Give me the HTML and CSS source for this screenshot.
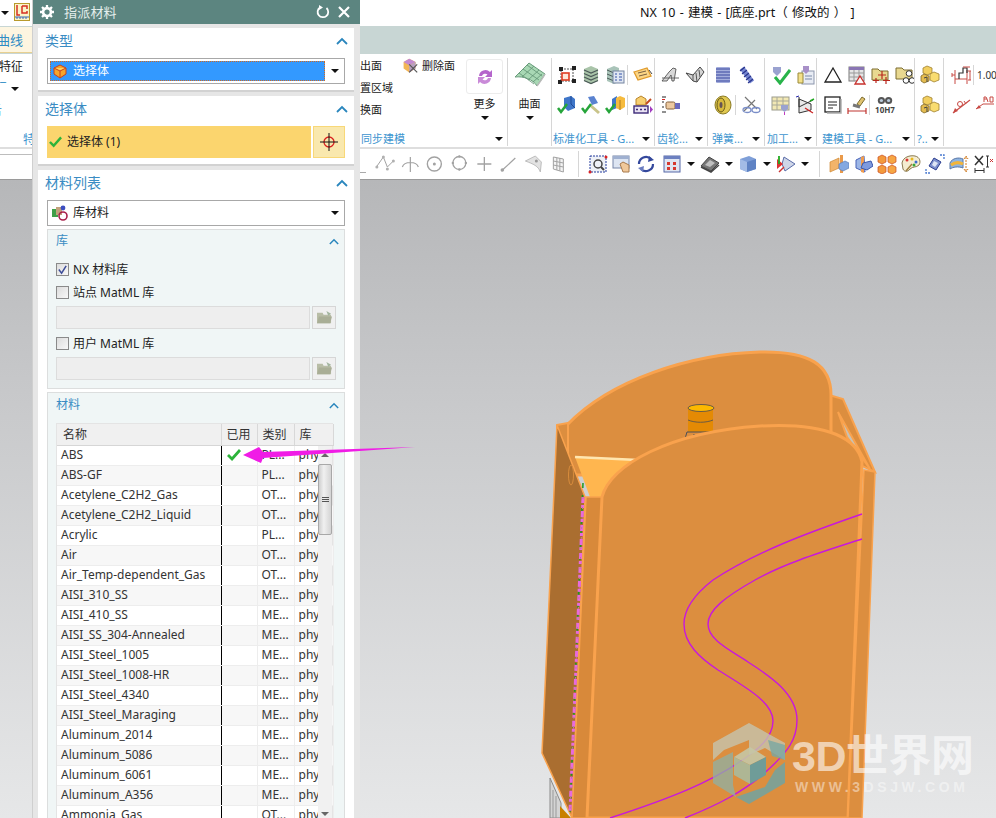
FILE: index.html
```html
<!DOCTYPE html>
<html lang="zh-CN">
<head>
<meta charset="utf-8">
<title>NX 10 - 建模</title>
<link rel="stylesheet" href="styles.css">
</head>
<body>
<svg class="defs" aria-hidden="true">
  <symbol id="frame" viewBox="0 0 20 20"><path d="M4 4H16V16H4Z" fill="none" stroke="#555" stroke-dasharray="2 1"/><rect x="2" y="2" width="4" height="4" fill="#222"/><rect x="15" y="1" width="4" height="4" fill="#222"/><rect x="1" y="15" width="4" height="4" fill="#222"/><rect x="15" y="14" width="4" height="4" fill="#222"/><rect x="5" y="8" width="7" height="7" fill="#fde7d8" stroke="#e03c20" stroke-width="1.6"/></symbol>
  <symbol id="stack" viewBox="0 0 20 20"><path d="M3 4L10 1L17 4V16L10 19L3 16Z" fill="#a9c4a9"/><path d="M3 5L10 8L17 5M3 8.500L10 11.500L17 8.500M3 12L10 15L17 12M3 15.500L10 18.500L17 15.500" fill="none" stroke="#4c5a58" stroke-width="1.200"/></symbol>
  <symbol id="stackdoc" viewBox="0 0 20 20"><path d="M2 4L9 1L14 3V17L9 19L2 16Z" fill="#a9c4b9"/><path d="M2 5L9 8M2 9L9 12M2 13L9 16" stroke="#4c5a58" fill="none"/><rect x="8" y="6" width="11" height="12" fill="#dfe6f2" stroke="#7484a0"/><path d="M10 9H12M14 9H17M10 12H12M14 12H17M10 15H12M14 15H17" stroke="#3552a8"/></symbol>
  <symbol id="tag" viewBox="0 0 20 20"><path d="M1 7L14 3L18 11L5 15Z" fill="#fbd585" stroke="#e09a2a" stroke-width="1.300"/><path d="M5 8L13 6M6 11L14 9" stroke="#7a6040"/><path d="M16 5L19 9" stroke="#444"/></symbol>
  <symbol id="bluecheck" viewBox="0 0 20 20"><path d="M7 3L14 1L18 4V13L11 16L7 12Z" fill="#3f76c9"/><path d="M14 1V9L18 13" fill="none" stroke="#1f4a95"/><path d="M1 13L4 17L10 9" fill="none" stroke="#26a53a" stroke-width="2.500"/></symbol>
  <symbol id="hammer" viewBox="0 0 20 20"><path d="M7 2L13 1L17 8L11 10Z" fill="#5a82d0"/><path d="M9 10L18 18" stroke="#c9c48a" stroke-width="3"/><path d="M1 13L4 17L10 9" fill="none" stroke="#26a53a" stroke-width="2.500"/></symbol>
  <symbol id="boxcheck" viewBox="0 0 20 20"><path d="M7 4L12 1V13L7 15Z" fill="#3f76c9"/><path d="M11 3L15 1L20 3V12L15 15L11 13Z" fill="#f6bb3e"/><path d="M15 5V15" stroke="#b27d1d"/><path d="M1 13L4 17L10 9" fill="none" stroke="#26a53a" stroke-width="2.500"/></symbol>
  <symbol id="boxpen" viewBox="0 0 20 20"><path d="M3 4L8 1L13 4V10H3Z" fill="#f7cf70" stroke="#b9852b"/><rect x="1" y="11" width="14" height="7" fill="#e8e2f2" stroke="#3c2a78" stroke-width="1.400"/><path d="M3 14.500H5M7 14.500H9M11 14.500H13" stroke="#3c2a78" stroke-width="1.500"/><path d="M17 11V18L20 14.500Z" fill="#a23dc0"/><path d="M13 9L18 4" stroke="#c24a20" stroke-width="2"/></symbol>
  <symbol id="gear1" viewBox="0 0 20 20"><path d="M1 16L8 7L12 3L15 4L13 16H11L10 10L6 16Z" fill="#d8d8d8" stroke="#444" stroke-width=".8"/><path d="M1 13H18" stroke="#666"/></symbol>
  <symbol id="gear2" viewBox="0 0 20 20"><path d="M1 8L8 10L15 2L19 7L12 17L8 16Z" fill="#d4d4d4" stroke="#444"/><path d="M8 10L8 16M11 8L12 17M14 5L15 12" stroke="#555"/></symbol>
  <symbol id="hand" viewBox="0 0 20 20"><path d="M1 2H5M1 7H3M1 12H3M1 17H5" stroke="#222"/><path d="M1 4.500H4" stroke="#d22" /><rect x="5" y="7" width="9" height="7" rx="1.500" fill="#ecc9a0" stroke="#84603c"/><rect x="14" y="8" width="5" height="6" fill="#6a6abe"/></symbol>
  <symbol id="spring" viewBox="0 0 20 20"><rect x="3" y="2" width="14" height="16" rx="1" fill="#a4aedc"/><path d="M3 4H17M3 7H17M3 10H17M3 13H17M3 16H17" stroke="#3a48a0" stroke-width="1.200"/></symbol>
  <symbol id="springd" viewBox="0 0 20 20"><path d="M5 3L15 17" stroke="#7585d0" stroke-width="5"/><path d="M3 6L8 2M5 9L10 5M7 12L12 8M9 15L14 11M11 18L16 14" stroke="#26328a" stroke-width="1.100"/></symbol>
  <symbol id="coil" viewBox="0 0 20 20"><ellipse cx="10" cy="10" rx="8" ry="9" fill="#e0c850" stroke="#8a7a24"/><ellipse cx="8" cy="10" rx="4" ry="7" fill="#d6b93c" stroke="#6a5c18"/><ellipse cx="8" cy="10" rx="1.500" ry="3" fill="#655"/></symbol>
  <symbol id="scissors" viewBox="0 0 20 20"><path d="M4 2L16 14M3 16L14 5" stroke="#777" stroke-width="1.200"/><ellipse cx="6" cy="15" rx="4" ry="2.500" fill="none" stroke="#7a8ec8" stroke-width="1.300"/><ellipse cx="15" cy="15" rx="4" ry="2.500" fill="none" stroke="#7a8ec8" stroke-width="1.300"/></symbol>
  <symbol id="mcheck" viewBox="0 0 20 20"><path d="M2 2H10V7L6 11L2 7Z" fill="#9aa2d0"/><path d="M4 12L9 18L19 5" fill="none" stroke="#28b34a" stroke-width="3"/></symbol>
  <symbol id="mdoc" viewBox="0 0 20 20"><rect x="7" y="6" width="12" height="13" fill="#e8ecf4" stroke="#8c96ac"/><path d="M3 8H8V18H3Z" fill="#f3e08a" stroke="#9a8a3a"/><path d="M8 1H14V6L11 9L8 6Z" fill="#a890c8"/><path d="M10 11H17M10 14H17" stroke="#7a8aa8"/></symbol>
  <symbol id="mgrid" viewBox="0 0 20 20"><rect x="1" y="2" width="17" height="13" fill="#f2e8b4" stroke="#9c9c8c"/><path d="M1 6H18M1 10H18M6 2V15M12 2V15" stroke="#a8a898"/><path d="M10 10H17V14L13.500 17L10 14Z" fill="#9aa2d0"/><path d="M13.500 17V20" stroke="#c03bc0"/></symbol>
  <symbol id="axes" viewBox="0 0 20 20"><path d="M4 4L16 9V15L4 18Z" fill="#e8e8e8" stroke="#333"/><path d="M4 2V12L18 5" fill="none" stroke="#333"/><path d="M1 2L4 1" stroke="#22a"/><path d="M15 6L19 4" stroke="#2a2" stroke-width="1.500"/><path d="M10 13L18 18" stroke="#c22" stroke-width="1.200"/></symbol>
  <symbol id="tri" viewBox="0 0 20 20"><path d="M10 3L18 17H2Z" fill="none" stroke="#222" stroke-width="1.300"/></symbol>
  <symbol id="table" viewBox="0 0 20 20"><rect x="2" y="2" width="15" height="14" fill="#e6e6e6" stroke="#7a7a7a"/><rect x="2" y="2" width="15" height="3" fill="#8a76b4"/><path d="M2 8H17M2 12H17M7 5V16M12 5V16" stroke="#999"/><path d="M13 11L18 19H8Z" fill="#fbfbfb" stroke="#c8302c" stroke-width="1.300"/></symbol>
  <symbol id="folderplus" viewBox="0 0 20 20"><path d="M1 4H7L9 6H17V15H1Z" fill="#e8d890" stroke="#7c6c30"/><path d="M11 6V14M7 10H15M15 12V19M12 15.500H19M5 13V18M2 15.500H8" stroke="#b8281e" stroke-width="1.200"/></symbol>
  <symbol id="foldercirc" viewBox="0 0 20 20"><path d="M1 3H7L9 5H17V14H1Z" fill="#e8d890" stroke="#7c6c30"/><circle cx="14" cy="8.500" r="2.800" fill="#fff" stroke="#333"/><circle cx="11" cy="15.500" r="2.800" fill="#fff" stroke="#333"/><circle cx="17" cy="15.500" r="2.800" fill="#fff" stroke="#333"/></symbol>
  <symbol id="note" viewBox="0 0 20 20"><rect x="2" y="2" width="15" height="15" fill="#fff" stroke="#222" stroke-width="1.300"/><path d="M5 7H14M5 10H14M5 13H10" stroke="#222"/><path d="M18 4V18H4" fill="none" stroke="#aaa" stroke-width="1.400"/></symbol>
  <symbol id="brush" viewBox="0 0 20 20"><path d="M10 9L15 2L18 4L13 11Z" fill="#e0c270" stroke="#7c6c30"/><path d="M6 10L13 12" stroke="#777" stroke-width="3"/><path d="M1 13V19M19 13V19M1 16H19" stroke="#c03530" stroke-width="1.200"/></symbol>
  <symbol id="boxes" viewBox="0 0 20 20"><path d="M7 1L12 3V8L7 10L3 8V3Z" fill="#f2cf60" stroke="#a08030" stroke-width=".8"/><path d="M4 9L9 11V16L4 18L1 16V11Z" fill="#e4bc50" stroke="#806828" stroke-width=".8"/><path d="M14 7L19 9V15L14 17L10 15V9Z" fill="#f9dc70" stroke="#a08030" stroke-width=".8"/><path d="M4 13L7 12V17" stroke="#444" fill="none"/></symbol>
  <symbol id="step" viewBox="0 0 20 20"><path d="M1 10H4M1 8V12M4 14H16M4 5V19M16 5V19" stroke="#c84a44" fill="none"/><path d="M8 14V8H12V3H16V8" fill="none" stroke="#333" stroke-width="1.200"/><path d="M12 2H19M19 6V15M17 6H20M17 15H20" stroke="#c84a44"/></symbol>
  <symbol id="rarrow" viewBox="0 0 20 20"><path d="M2 18L19 5" stroke="#c84a44" stroke-width="1.200"/><path d="M2 18L7 16L4 13Z" fill="#c84a44"/><circle cx="9" cy="9" r="2.500" fill="none" stroke="#c84a44"/><path d="M13 6L15 9" stroke="#c84a44"/></symbol>
  <symbol id="rphi" viewBox="0 0 20 20"><path d="M1 14L8 9H19" fill="none" stroke="#c84a44"/><path d="M1 14L6 13L4 10Z" fill="#c84a44"/><path d="M9 7V2H11L12 4H9M12 4L13 7M15 2H18V7H15Z" fill="none" stroke="#c84a44"/></symbol>
  <symbol id="t-curve" viewBox="0 0 20 20"><path d="M1 13L8 3L12 13L18 7" fill="none" stroke="#a2a2a2"/><circle cx="1.500" cy="13" r="1.500" fill="#b0b0b0"/><circle cx="8" cy="3" r="1.500" fill="#b0b0b0"/><circle cx="12" cy="15" r="1.500" fill="#b0b0b0"/><circle cx="18" cy="7" r="1.500" fill="#b0b0b0"/></symbol>
  <symbol id="t-arc" viewBox="0 0 20 20"><path d="M2 13C4 7 16 7 18 13M10 3V18" fill="none" stroke="#a2a2a2" stroke-width="1.200"/></symbol>
  <symbol id="t-dot" viewBox="0 0 20 20"><circle cx="10" cy="10" r="7" fill="none" stroke="#a2a2a2" stroke-width="1.400"/><circle cx="10" cy="10" r="1.500" fill="#a2a2a2"/></symbol>
  <symbol id="t-quad" viewBox="0 0 20 20"><circle cx="10" cy="9" r="6.500" fill="none" stroke="#a2a2a2" stroke-width="1.300"/><circle cx="10" cy="2.500" r="1.200" fill="#a2a2a2"/><circle cx="10" cy="15.500" r="1.200" fill="#a2a2a2"/><circle cx="3.500" cy="9" r="1.200" fill="#a2a2a2"/><circle cx="16.500" cy="9" r="1.200" fill="#a2a2a2"/></symbol>
  <symbol id="t-plus" viewBox="0 0 20 20"><path d="M10 3V17M3 10H17" stroke="#a2a2a2" stroke-width="1.300"/></symbol>
  <symbol id="t-line" viewBox="0 0 20 20"><path d="M3 17L17 4" stroke="#a2a2a2" stroke-width="1.200"/><circle cx="4" cy="16" r="1.800" fill="#a2a2a2"/></symbol>
  <symbol id="t-face" viewBox="0 0 20 20"><path d="M2 7L12 2L18 8L17 18C15 12 10 10 2 7Z" fill="#e2e2e2" stroke="#bdbdbd"/><circle cx="13" cy="7" r="1.500" fill="#999"/></symbol>
  <symbol id="t-grid" viewBox="0 0 20 20"><path d="M5 3L15 5V18L5 15Z" fill="#f4f4f4" stroke="#a2a2a2"/><path d="M5 7L15 9M5 11L15 13M8.500 4V16M11.500 4V17" stroke="#a2a2a2"/></symbol>
  <symbol id="t-view" viewBox="0 0 20 20"><rect x="2" y="2" width="16" height="4" fill="#7d8cc0"/><path d="M2 2H18V18H2Z" fill="#eef1f7" stroke="#223b9c" stroke-dasharray="2 1"/><circle cx="10" cy="10" r="4" fill="none" stroke="#444" stroke-width="1.500"/><path d="M13 13L16 16" stroke="#444" stroke-width="2"/><circle cx="2" cy="18" r="1.500" fill="#d22"/><circle cx="18" cy="3" r="1.500" fill="#d22"/></symbol>
  <symbol id="t-hand" viewBox="0 0 20 20"><rect x="1" y="2" width="16" height="12" fill="#dde5f2" stroke="#7686a8"/><rect x="1" y="2" width="16" height="3" fill="#9fb0d0"/><path d="M8 10L11 8L17 11V18H11Z" fill="#f0c89a" stroke="#a87a4c"/></symbol>
  <symbol id="t-rot" viewBox="0 0 20 20"><path d="M3 10A7 7 0 0 1 15 5" fill="none" stroke="#34489c" stroke-width="2.200"/><path d="M17 10A7 7 0 0 1 5 15" fill="none" stroke="#34489c" stroke-width="2.200"/><path d="M13 2L18 6L12 8Z" fill="#34489c"/><path d="M7 18L2 14L8 12Z" fill="#6a7cc0"/></symbol>
  <symbol id="t-disp" viewBox="0 0 20 20"><rect x="2" y="2" width="16" height="16" fill="#dfe6f2" stroke="#5668a8"/><rect x="2" y="2" width="16" height="3" fill="#6c80c0"/><path d="M5 8H8V11H5ZM11 8H14V11H11ZM5 13H8V16H5ZM11 13H14V16H11Z" fill="#d63a30"/></symbol>
  <symbol id="t-gray" viewBox="0 0 20 20"><path d="M1 12L9 3L19 9L11 17Z" fill="#777" stroke="#444"/><path d="M5 11L10 6L15 9L10 13Z" fill="#c0c0c0"/><path d="M1 13L11 18L19 11" fill="none" stroke="#444" stroke-width="1.500"/></symbol>
  <symbol id="t-cube" viewBox="0 0 20 20"><path d="M2 5L11 2L18 5V15L9 18L2 15Z" fill="#7f9fd8"/><path d="M2 5L9 8V18L2 15Z" fill="#a3bce6"/><path d="M9 8L18 5V15L9 18Z" fill="#5f83c4"/></symbol>
  <symbol id="t-dia" viewBox="0 0 20 20"><path d="M8 3L19 10L9 17L6 10Z" fill="#cfd6e8" stroke="#5a6ca8"/><path d="M1 5L7 10L1 15Z" fill="#d33"/><path d="M3 2V10" stroke="#2a2" stroke-width="1.800"/><path d="M3 18L8 13" stroke="#c33" stroke-width="1.500"/></symbol>
  <symbol id="t-pl1" viewBox="0 0 20 20"><path d="M1 8L10 4V14L1 18Z" fill="#f2b46a" stroke="#cf8830" stroke-width=".7"/><path d="M11 1L14 1V19L11 19Z" fill="#ea9a4a"/><path d="M10 10L16 7L20 9V14L14 17L10 15Z" fill="#84a8e0" stroke="#5a7cb8" stroke-width=".7"/></symbol>
  <symbol id="t-pl2" viewBox="0 0 20 20"><path d="M3 6L11 2L12 18L3 14Z" fill="#9cb6e6" stroke="#4a64b8"/><path d="M8 3L11 2V19L8 18Z" fill="#ef9c50"/><path d="M10 9L18 7L20 12L14 16L8 14Z" fill="#7e9ade" stroke="#3c58ac"/></symbol>
  <symbol id="t-orange" viewBox="0 0 20 20"><path d="M1 3L5 1L9 3V8L5 10L1 8Z" fill="#f39a3c" stroke="#c84a20" stroke-width=".7"/><path d="M11 3L15 1L19 3V8L15 10L11 8Z" fill="#f6a644" stroke="#c84a20" stroke-width=".7"/><path d="M1 13L5 11L9 13V18L5 20L1 18Z" fill="#f39a3c" stroke="#c84a20" stroke-width=".7"/><path d="M11 13L15 11L19 13V18L15 20L11 18Z" fill="#f6a644" stroke="#c84a20" stroke-width=".7"/></symbol>
  <symbol id="t-pal" viewBox="0 0 20 20"><path d="M1 9C2 3 9 1 14 2C19 3 20 8 18 11C15 14 12 12 9 15C7 18 3 18 2 15Z" fill="#f4ecd0" stroke="#8a7a50"/><circle cx="6" cy="6" r="1.500" fill="#d33"/><circle cx="11" cy="5" r="1.500" fill="#e8b820"/><circle cx="15" cy="8" r="1.500" fill="#3a6ad0"/><circle cx="13" cy="11" r="1.500" fill="#3aa83a"/><path d="M5 17L11 10" stroke="#a08040" stroke-width="1.500"/></symbol>
  <symbol id="t-blue" viewBox="0 0 20 20"><path d="M9 4L16 8L11 16L4 12Z" fill="#7d90cc" stroke="#2c3e90"/><path d="M9 7L13 9L10 13L7 11Z" fill="#dfe6f5"/><path d="M15 1L19 1L19 5M1 15L1 19L5 19" fill="none" stroke="#4a7ad0" stroke-width="1.300" stroke-dasharray="2 1"/></symbol>
  <symbol id="t-hat" viewBox="0 0 20 20"><path d="M1 9C3 4 10 3 14 5V14C9 12 4 13 1 15Z" fill="#8fb4e0" stroke="#5a78a8"/><path d="M2 11C6 8 10 8 14 10" stroke="#f2b53a" stroke-width="3" fill="none"/><path d="M17 3V17M15 5L17 2L19 5M15 15L17 18L19 15" fill="none" stroke="#d07a20" stroke-dasharray="2 1"/></symbol>
  <symbol id="t-xdim" viewBox="0 0 20 20"><path d="M2 2L10 11M10 2L2 11" stroke="#333" stroke-width="1.500"/><path d="M2 14V19M11 14V19M2 16.500H11" stroke="#333"/><path d="M13 2H16M13 13H16M14.500 2V13" stroke="#333"/><path d="M17 5L20 8M20 5L17 8" stroke="#c33"/></symbol>
</svg>

<div class="app">
  <header class="titlebar">
    <div class="tb-left">
      <span class="caret dark"></span>
      <svg class="logo" viewBox="0 0 16 18"><rect x=".5" y=".5" width="15" height="17" fill="#fbf5c8" stroke="#b89a2c"/><path d="M3 2V12H6M8 3H13V6M8 3V10H13V8" fill="none" stroke="#d63024" stroke-width="1.500"/><path d="M1 14H15M3 14V16M6 14V16M9 14V16M12 14V16" stroke="#3a68b8"/></svg>
    </div>
    <div class="title-text">NX 10 - 建模 - [底座.prt（ 修改的 ） ]</div>
  </header>

  <nav class="band"><span class="band-tab">曲线</span></nav>

  <section class="ribbon">
    <div class="stub">
      <div class="stub-row">特征</div>
      <div class="stub-row stub-mid"><span class="blue-bit">‾</span><span class="caret dark"></span></div>
      <div class="stub-row blue-bit stub-sliver">舌</div>
      <div class="stub-label">特</div>
    </div>
    <div class="rspace"></div>

    <div class="group g-sync">
      <div class="sync-main">
        <div class="textcol"><span>出面</span><span>置区域</span><span>换面</span></div>
        <div class="delface">
          <svg class="ic" viewBox="0 0 20 20"><path d="M2 5L9 1L17 5V13L9 18L2 13Z" fill="#f2b656"/><path d="M2 5L9 1L17 5L9 9Z" fill="#c28ad2"/><path d="M9 9L17 5V13L9 18Z" fill="#b8a0c0"/><path d="M9 8L19 18M19 8L9 18" stroke="#555" stroke-width="1.500"/></svg>
          <span>删除面</span>
        </div>
        <div class="bigtool">
          <div class="morebtn"><svg class="ic" viewBox="0 0 20 20"><path d="M4 9A6.500 6.500 0 0 1 15 5L17 3V10H10L12.500 7.500A3.500 3.500 0 0 0 7 9Z" fill="#b565cc"/><path d="M16 11A6.500 6.500 0 0 1 5 15L3 17V10H10L7.500 12.500A3.500 3.500 0 0 0 13 11Z" fill="#c98ad8"/></svg></div>
          <span class="biglabel">更多</span>
          <span class="caret dark"></span>
        </div>
      </div>
      <div class="glabel"><span>同步建模</span><span class="caret dark"></span></div>
    </div>

    <div class="group g-surf">
      <div class="bigtool">
        <svg class="surficon" viewBox="0 0 32 26"><path d="M1 15L15 1L31 12L23 24C19 17 9 14 1 15Z" fill="#a8d8b4" stroke="#6a9c7c"/><path d="M5 11L20 22M9 7L25 18M13 3L28 14M20 4L8 15M25 8L14 18M28 12L19 20" stroke="#5f9272" stroke-width=".8"/><path d="M23 24C26 20 29 16 31 12" stroke="#bbb" stroke-width="1.500" fill="none"/></svg>
        <span class="biglabel">曲面</span>
        <span class="caret dark"></span>
      </div>
    </div>

    <div class="group g-std">
      <div class="tools">
        <div class="trow"><svg class="ic"><use href="#frame"/></svg><svg class="ic"><use href="#stack"/></svg><svg class="ic"><use href="#stackdoc"/></svg><i class="sep"></i><svg class="ic"><use href="#tag"/></svg></div>
        <div class="trow"><svg class="ic"><use href="#bluecheck"/></svg><svg class="ic"><use href="#hammer"/></svg><svg class="ic"><use href="#boxcheck"/></svg><i class="sep"></i><svg class="ic"><use href="#boxpen"/></svg></div>
      </div>
      <div class="glabel"><span>标准化工具 - G...</span><span class="caret dark"></span></div>
    </div>

    <div class="group g-gear">
      <div class="tools">
        <div class="trow"><svg class="ic"><use href="#gear1"/></svg><svg class="ic"><use href="#gear2"/></svg></div>
        <div class="trow"><svg class="ic"><use href="#hand"/></svg></div>
      </div>
      <div class="glabel"><span>齿轮...</span><span class="caret dark"></span></div>
    </div>

    <div class="group g-spring">
      <div class="tools">
        <div class="trow"><svg class="ic"><use href="#spring"/></svg><svg class="ic"><use href="#springd"/></svg></div>
        <div class="trow"><svg class="ic"><use href="#coil"/></svg><i class="sep"></i><svg class="ic"><use href="#scissors"/></svg></div>
      </div>
      <div class="glabel"><span>弹簧...</span><span class="caret dark"></span></div>
    </div>

    <div class="group g-mach">
      <div class="tools">
        <div class="trow"><svg class="ic"><use href="#mcheck"/></svg><svg class="ic"><use href="#mdoc"/></svg></div>
        <div class="trow"><svg class="ic"><use href="#mgrid"/></svg><svg class="ic"><use href="#axes"/></svg></div>
      </div>
      <div class="glabel"><span>加工...</span><span class="caret dark"></span></div>
    </div>

    <div class="group g-model">
      <div class="tools">
        <div class="trow"><svg class="ic"><use href="#tri"/></svg><svg class="ic"><use href="#table"/></svg><svg class="ic"><use href="#folderplus"/></svg><svg class="ic"><use href="#foldercirc"/></svg></div>
        <div class="trow"><svg class="ic"><use href="#note"/></svg><svg class="ic"><use href="#brush"/></svg><i class="sep"></i><span class="binoc"><svg class="binoc-ic" viewBox="0 0 20 10"><circle cx="6" cy="5" r="4" fill="#555"/><circle cx="14" cy="5" r="4" fill="#555"/><circle cx="6" cy="5" r="1.800" fill="#bcd"/><circle cx="14" cy="5" r="1.800" fill="#bcd"/></svg><b>10H7</b></span></div>
      </div>
      <div class="glabel"><span>建模工具 - G...</span><span class="caret dark"></span></div>
    </div>

    <div class="group g-q">
      <div class="tools">
        <div class="trow"><svg class="ic"><use href="#boxes"/></svg></div>
        <div class="trow"><svg class="ic"><use href="#boxes"/></svg></div>
      </div>
      <div class="glabel"><span>?..</span><span class="caret dark"></span></div>
    </div>

    <div class="group g-last">
      <div class="tools">
        <div class="trow"><svg class="ic"><use href="#step"/></svg><i class="sep"></i><span class="num">1.00</span></div>
        <div class="trow"><svg class="ic"><use href="#rarrow"/></svg><svg class="ic"><use href="#rphi"/></svg></div>
      </div>
    </div>
  </section>

  <section class="toolbar">
    <div class="tb-stub"></div>
    <i class="tb-bit"></i>
    <svg class="tb wide"><use href="#t-curve"/></svg><svg class="tb wide"><use href="#t-arc"/></svg><svg class="tb wide"><use href="#t-dot"/></svg><svg class="tb wide"><use href="#t-quad"/></svg><svg class="tb wide"><use href="#t-plus"/></svg><svg class="tb wide"><use href="#t-line"/></svg><svg class="tb wide"><use href="#t-face"/></svg><svg class="tb wide"><use href="#t-grid"/></svg>
    <i class="tsep"></i>
    <svg class="tb"><use href="#t-view"/></svg><svg class="tb"><use href="#t-hand"/></svg><svg class="tb"><use href="#t-rot"/></svg><svg class="tb gapl"><use href="#t-disp"/></svg><span class="caret dark tcaret"></span>
    <svg class="tb"><use href="#t-gray"/></svg><span class="caret dark tcaret"></span>
    <svg class="tb"><use href="#t-cube"/></svg><span class="caret dark tcaret"></span>
    <svg class="tb"><use href="#t-dia"/></svg><span class="caret dark tcaret"></span>
    <i class="tsep"></i>
    <svg class="tb"><use href="#t-pl1"/></svg><svg class="tb"><use href="#t-pl2"/></svg><svg class="tb"><use href="#t-orange"/></svg><svg class="tb"><use href="#t-pal"/></svg><svg class="tb"><use href="#t-blue"/></svg><svg class="tb"><use href="#t-hat"/></svg><svg class="tb"><use href="#t-xdim"/></svg>
  </section>

  <main class="canvas">
    <svg class="scene" viewBox="0 180 996 638">
      <!-- gray lower-left part -->
      <path d="M550 778L561 803V818H550Z" fill="#d4d4d4" stroke="#8a8a8a"/>
      <path d="M553 790V818M556 796V818" stroke="#999"/>
      <path d="M560 806L571 818H560Z" fill="#c88000"/>
      <!-- right rear ribs -->
      <path d="M829 395L843 399L875 472L862 466L829 440Z" fill="#dc8e3f" stroke="#f9a24d" stroke-width="2"/>
      <path d="M838 412L870 469L847 437Z" fill="#c9c2b4" stroke="#f9a24d" stroke-width="2"/>
      <!-- back wall -->
      <path d="M567 425C610 380 690 354 760 352C810 351 831 365 831 395V475H567Z" fill="#dc8e3f" stroke="#f9a24d" stroke-width="3"/>
      <path d="M557 425L568 423L568 470L557 440Z" fill="#dc8e3f" stroke="#f9a24d" stroke-width="2"/>
      <!-- pin -->
      <path d="M688 408V432H713V408Z" fill="#e48a04"/>
      <path d="M688 420C695 423 706 423 713 420" fill="none" stroke="#6a5a44" stroke-width="1"/>
      <ellipse cx="701" cy="408" rx="13" ry="3.500" fill="#fcb800" stroke="#6a5a44"/>
      <path d="M684 442L687 432H718" fill="none" stroke="#4a4e58" stroke-width="1"/>
      <path d="M690 442L694 434L697 440L700 434" fill="#f0b030" stroke="#4a4e58" stroke-width=".8"/>
      <!-- floor triangle -->
      <path d="M575 457L640 460L602 497L590 497Z" fill="#ffb64f"/>
      <path d="M575 457L638 460" stroke="#ffe6b0" stroke-width="2.500"/>
      <!-- left side face -->
      <path d="M557 425L585 497L572 818L542 753L550 580Z" fill="#aa6e30" stroke="#f9a24d" stroke-width="1.500"/>
      <ellipse cx="571" cy="475" rx="2.500" ry="10" fill="none" stroke="#d88c3c"/>
      <!-- front strip -->
      <path d="M586 497L602 497L587 818H572Z" fill="#d8893a" stroke="#f9a24d" stroke-width="1.500"/>
      <path d="M583 483L570 812" stroke="#1c9a20" stroke-width="1.500" stroke-dasharray="5 7"/>
      <path d="M583 497L570 812" stroke="#e86adc" stroke-width="3" stroke-dasharray="6 2 3 3"/>
      <path d="M583 497L570 812" stroke="#c47a9a" stroke-width="1" stroke-dasharray="2 8"/>
      <!-- front face -->
      <path d="M602 497C610 465 670 432 760 426C830 422 858 440 862 462L848 818H587Z" fill="#dc8e3f" stroke="#f9a24d" stroke-width="3"/>
      <!-- right strip -->
      <path d="M864 470L875 472L862 818H848Z" fill="#dc8e3f" stroke="#f9a24d" stroke-width="1.500"/>
      <!-- curves -->
      <path d="M862 514C810 532 755 552 713 580C695 594 684 608 684 624C684 644 700 658 718 670C745 687 773 702 773 721C773 735 763 745 752 753C715 782 665 800 610 818" fill="none" stroke="#c818dc" stroke-width="1.400"/>
      <path d="M862 539C825 551 785 563 755 580C725 597 708 610 708 624C708 640 730 650 748 662C770 676 797 694 797 720C797 740 787 752 770 768C745 792 715 806 685 818" fill="none" stroke="#c818dc" stroke-width="1.400"/>
      <!-- watermark -->
      <g class="wm">
        <path d="M749 723L785 743V760L765 748L749 755V740L724 750L713 760V743Z" fill="#c6c4ae" fill-opacity=".8"/>
        <path d="M785 762V783L749 804L736 797L765 787L775 770Z" fill="#6aa5a8" fill-opacity=".8"/>
        <path d="M713 762L733 752V785L736 797L713 783Z" fill="#8fb0a6" fill-opacity=".75"/>
        <path d="M768 740L785 745V760L772 756Z" fill="#78a8a2" fill-opacity=".8"/>
        <path d="M750 747L766 757L750 765L734 757Z" fill="#c5c7a5" fill-opacity=".9"/>
        <path d="M734 757L750 765V784L734 775Z" fill="#a9ba9d" fill-opacity=".9"/>
        <path d="M766 757V775L750 784V765Z" fill="#6f9c98"/>
        <text x="792" y="771" class="wm-big">3D世界网</text>
        <text x="795" y="792" class="wm-small">WWW.3DSJW.COM</text>
      </g>
    </svg>
  </main>

  <aside class="dialog">
    <div class="dlg-title">
      <svg class="dlg-gear" viewBox="0 0 16 16"><circle cx="8" cy="8" r="4.500" fill="none" stroke="#fff" stroke-width="3"/><path d="M8 0V3M8 13V16M0 8H3M13 8H16M2.300 2.300L4.400 4.400M11.600 11.600L13.700 13.700M2.300 13.700L4.400 11.600M11.600 4.400L13.700 2.300" stroke="#fff" stroke-width="2.600"/></svg>
      <span class="dlg-name">指派材料</span>
      <svg class="dlg-ctl" viewBox="0 0 14 14"><path d="M4 2.500A5.300 5.300 0 1 0 10.500 3" fill="none" stroke="#fff" stroke-width="1.800"/><path d="M3 0L7 2.500L3 5Z" fill="#fff"/></svg>
      <svg class="dlg-ctl" viewBox="0 0 14 14"><path d="M2 2L12 12M12 2L2 12" stroke="#fff" stroke-width="2.200"/></svg>
    </div>

    <section class="panel p-type">
      <div class="phead"><span>类型</span><svg class="chev" viewBox="0 0 12 8"><path d="M1 7L6 2L11 7" fill="none" stroke="#2a86bd" stroke-width="1.800"/></svg></div>
      <div class="select">
        <div class="sel-inner on">
          <svg class="sel-ic" viewBox="0 0 16 16"><path d="M2 5L8 2L14 5V11L8 15L2 11Z" fill="#f6a52c" stroke="#c8401c"/><path d="M2 5L8 8L14 5" fill="#ffd060" stroke="#c8401c"/><path d="M8 8V15" stroke="#c8401c"/></svg>
          <span>选择体</span>
        </div>
        <span class="caret dark"></span>
      </div>
    </section>

    <section class="panel p-body">
      <div class="phead"><span>选择体</span><svg class="chev" viewBox="0 0 12 8"><path d="M1 7L6 2L11 7" fill="none" stroke="#2a86bd" stroke-width="1.800"/></svg></div>
      <div class="pick">
        <div class="pick-bar">
          <svg class="pick-check" viewBox="0 0 14 12"><path d="M1 6L5 10L13 1" fill="none" stroke="#2cb33a" stroke-width="2.600"/></svg>
          <span>选择体 (1)</span>
        </div>
        <div class="pick-btn"><svg viewBox="0 0 20 20" class="cross"><circle cx="10" cy="10" r="5" fill="none" stroke="#d82020" stroke-width="1.300"/><path d="M10 1V19M1 10H19" stroke="#111"/></svg></div>
      </div>
    </section>

    <section class="panel p-list">
      <div class="phead"><span>材料列表</span><svg class="chev" viewBox="0 0 12 8"><path d="M1 7L6 2L11 7" fill="none" stroke="#2a86bd" stroke-width="1.800"/></svg></div>
      <div class="select">
        <div class="sel-inner">
          <svg class="sel-ic" viewBox="0 0 16 16"><rect x="0" y="4" width="6" height="8" fill="#3f9f48"/><rect x="4" y="2" width="6" height="8" fill="#c2a27c"/><circle cx="11" cy="3" r="2.400" fill="#3c4ec0"/><circle cx="11" cy="11" r="4" fill="none" stroke="#a8204a" stroke-width="1.600"/></svg>
          <span class="sel-dark">库材料</span>
        </div>
        <span class="caret dark"></span>
      </div>

      <div class="sub s-lib">
        <div class="shead"><span>库</span><svg class="chev small" viewBox="0 0 12 8"><path d="M1 7L6 2L11 7" fill="none" stroke="#2a86bd" stroke-width="1.800"/></svg></div>
        <label class="cb cb-first"><i class="box checked"><svg viewBox="0 0 12 12"><path d="M2 6L5 10L10 2" fill="none" stroke="#3c4c98" stroke-width="1.600"/></svg></i>NX 材料库</label>
        <label class="cb"><i class="box"></i>站点 MatML 库</label>
        <div class="pathrow"><div class="pathinput"></div><div class="browse"><svg viewBox="0 0 18 16" class="folder"><path d="M1 3H7L8 5H16V14H1Z" fill="#b8bda6"/><path d="M3 7H17L15 14H1Z" fill="#a9ae96"/><path d="M11 1L16 4L13 6" fill="#a2b49e"/></svg></div></div>
        <label class="cb"><i class="box"></i>用户 MatML 库</label>
        <div class="pathrow"><div class="pathinput"></div><div class="browse"><svg viewBox="0 0 18 16" class="folder"><path d="M1 3H7L8 5H16V14H1Z" fill="#b8bda6"/><path d="M3 7H17L15 14H1Z" fill="#a9ae96"/><path d="M11 1L16 4L13 6" fill="#a2b49e"/></svg></div></div>
      </div>

      <div class="sub s-mat">
        <div class="shead"><span>材料</span><svg class="chev small" viewBox="0 0 12 8"><path d="M1 7L6 2L11 7" fill="none" stroke="#2a86bd" stroke-width="1.800"/></svg></div>
        <div class="tablewrap">
          <table class="mat">
            <colgroup><col class="c1"><col class="c2"><col class="c3"><col class="c4"></colgroup>
            <thead><tr><th class="first">名称</th><th>已用</th><th>类别</th><th>库</th></tr></thead>
            <tbody>
              <tr><td>ABS</td><td class="ck"><svg viewBox="0 0 14 12"><path d="M1 6L5 10L13 1" fill="none" stroke="#2cb33a" stroke-width="2.800"/></svg></td><td>PL...</td><td>phy</td></tr>
              <tr><td>ABS-GF</td><td></td><td>PL...</td><td>phy</td></tr>
              <tr><td>Acetylene_C2H2_Gas</td><td></td><td>OT...</td><td>phy</td></tr>
              <tr><td>Acetylene_C2H2_Liquid</td><td></td><td>OT...</td><td>phy</td></tr>
              <tr><td>Acrylic</td><td></td><td>PL...</td><td>phy</td></tr>
              <tr><td>Air</td><td></td><td>OT...</td><td>phy</td></tr>
              <tr><td>Air_Temp-dependent_Gas</td><td></td><td>OT...</td><td>phy</td></tr>
              <tr><td>AISI_310_SS</td><td></td><td>ME...</td><td>phy</td></tr>
              <tr><td>AISI_410_SS</td><td></td><td>ME...</td><td>phy</td></tr>
              <tr><td>AISI_SS_304-Annealed</td><td></td><td>ME...</td><td>phy</td></tr>
              <tr><td>AISI_Steel_1005</td><td></td><td>ME...</td><td>phy</td></tr>
              <tr><td>AISI_Steel_1008-HR</td><td></td><td>ME...</td><td>phy</td></tr>
              <tr><td>AISI_Steel_4340</td><td></td><td>ME...</td><td>phy</td></tr>
              <tr><td>AISI_Steel_Maraging</td><td></td><td>ME...</td><td>phy</td></tr>
              <tr><td>Aluminum_2014</td><td></td><td>ME...</td><td>phy</td></tr>
              <tr><td>Aluminum_5086</td><td></td><td>ME...</td><td>phy</td></tr>
              <tr><td>Aluminum_6061</td><td></td><td>ME...</td><td>phy</td></tr>
              <tr><td>Aluminum_A356</td><td></td><td>ME...</td><td>phy</td></tr>
              <tr><td>Ammonia_Gas</td><td></td><td>OT...</td><td>phy</td></tr>
            </tbody>
          </table>
          <div class="scrollbar">
            <span class="sb-up"></span>
            <div class="sb-thumb"><i></i><i></i><i></i></div>
            <span class="sb-down"></span>
          </div>
        </div>
      </div>
    </section>
  </aside>

  <svg class="arrow" viewBox="0 0 180 20"><path d="M0 10L16 2L20 7L172 2L20 13L18 18Z" fill="#f01ce6"/></svg>
</div>
</body>
</html>
```

FILE: styles.css
```css
* { box-sizing: border-box; }
html, body { margin: 0; padding: 0; background: #fff; }
body { font: 12px/16px "Noto Sans", "Noto Sans CJK SC", sans-serif; color: #222; overflow: hidden; }
.defs { display: none; }
i { font-style: normal; }

.app { position: relative; width: 996px; height: 818px; display: flex; flex-direction: column; overflow: hidden; background: #fff; }

.caret { display: inline-block; width: 0; height: 0; border-left: 4px solid transparent; border-right: 4px solid transparent; border-top: 4px solid #111; }

/* title */
.titlebar { height: 26px; flex: none; display: flex; align-items: center; background: #fff; }
.tb-left { display: flex; align-items: center; gap: 5px; width: 640px; padding-left: 1px; }
.logo { width: 16px; height: 18px; margin-top: -3px; }
.title-text { font-size: 12.500px; color: #111; white-space: pre; word-spacing: 1px; }

.band { height: 28px; flex: none; background: #c8d6d4; display: flex; }
.band-tab { width: 32px; height: 26px; margin-top: 1px; background: #fdf5e0; border-bottom: 1px solid #e8d090; color: #2f8cc4; font-size: 13px; line-height: 26px; text-indent: -3px; overflow: hidden; white-space: nowrap; }

/* ribbon */
.ribbon { height: 93px; flex: none; display: flex; padding: 4px 0 1px; background: #fff; }
.stub { width: 32px; flex: none; position: relative; margin-top: -2px; overflow: hidden; }
.stub-row { height: 22px; line-height: 22px; font-size: 12px; white-space: nowrap; text-indent: -1px; }
.stub-mid { display: flex; align-items: center; gap: 5px; text-indent: 0; }
.stub-sliver { text-indent: -10px; }
.blue-bit { color: #2f8cc4; }
.stub-label { color: #3d95cf; position: absolute; top: 76px; left: 23px; font-size: 12px; }
.rspace { width: 328px; flex: none; }

.group { flex: none; display: flex; flex-direction: column; border-right: 1px solid #d6d6d6; overflow: hidden; }
.tools { padding-top: 2px; flex: 1; }
.trow { display: flex; height: 30px; align-items: center; }
.ic { width: 20px; height: 20px; margin: 0 2px; flex: none; }
.sep { width: 1px; height: 20px; background: #d6d6d6; margin-right: 3px; flex: none; }
.glabel { height: 14px; line-height: 14px; display: flex; align-items: center; justify-content: space-between; padding: 0 4px 0 1px; color: #3d95cf; white-space: nowrap; font-size: 11px; }

.g-sync { width: 148px; }
.sync-main { display: flex; flex: 1; font-size: 11px; }
.textcol { width: 42px; display: flex; flex-direction: column; gap: 6px; padding-top: 0; white-space: nowrap; }
.delface { width: 61px; display: flex; align-items: flex-start; white-space: nowrap; height: 16px; }
.delface .ic { width: 16px; height: 16px; margin: 0 4px 0 0; }
.bigtool { width: 43px; display: flex; flex-direction: column; align-items: center; font-size: 11px; }
.morebtn { width: 37px; height: 35px; margin-top: 1px; border: 1px solid #ececec; border-radius: 3px; display: flex; align-items: center; justify-content: center; }
.morebtn .ic { margin: 0; }
.biglabel { height: 16px; margin-top: 2px; line-height: 16px; }
.bigtool .caret { margin-top: 4px; }
.g-surf { width: 44px; }
.g-surf .bigtool { padding-top: 4px; }
.surficon { width: 32px; height: 26px; margin-bottom: 6px; flex: none; }

.g-std { width: 103px; }
.g-std .tools, .g-spring .tools { padding-left: 3px; }
.g-gear { width: 53px; }
.g-gear .tools, .g-mach .tools, .g-model .tools { padding-left: 4px; }
.g-gear .glabel, .g-mach .glabel { padding-left: 2px; }
.g-spring { width: 57px; }
.g-spring .glabel { padding-left: 4px; }
.g-mach { width: 52px; }
.g-model { width: 98px; }
.g-model .glabel { padding-left: 5px; }
.g-q { width: 29px; }
.g-q .tools { padding-left: 3px; }
.g-q .glabel { padding-left: 2px; }
.g-last { width: 52px; border-right: 0; }
.g-last .tools { padding-left: 5px; }
.num { font-size: 10px; white-space: nowrap; color: #333; }
.binoc { display: flex; flex-direction: column; align-items: center; width: 24px; flex: none; }
.binoc-ic { width: 18px; height: 9px; }
.binoc b { font-size: 8px; line-height: 9px; font-weight: 700; color: #444; white-space: nowrap; }

/* toolbar */
.toolbar { height: 33px; flex: none; border-top: 2px solid #dedede; border-bottom: 1px solid #9a9a9a; display: flex; align-items: center; background: #fff; }
.tb-stub { width: 32px; height: 100%; margin-right: 328px; margin-top: 10px; border-top: 1px solid #bdbdbd; flex: none; }
.tb-bit { width: 6px; height: 1px; background: #aaa; margin: 16px 7px 0 0; flex: none; }
.tb { width: 24px; height: 20px; flex: none; padding: 0 2px; }
.tb.wide { width: 24.700px; }
.tb.gapl { margin-left: 2px; }
.tsep { width: 1px; height: 26px; background: #d6d6d6; margin: 0 7px; flex: none; }
.tcaret { margin: 0 3px; flex: none; }

/* canvas */
.canvas { flex: 1; background: linear-gradient(180deg, #b6b7b9 0%, #c8c9cb 35%, #e6e7e8 100%); }
.scene { display: block; width: 996px; height: 638px; }
.wm-big { font: 700 43px "Liberation Sans", "Noto Sans CJK SC", sans-serif; fill: #fff; fill-opacity: .6; letter-spacing: -.5px; }
.wm-small { font: 700 14px "Liberation Sans", sans-serif; fill: #fff; fill-opacity: .45; letter-spacing: 3.600px; }

/* dialog */
.dialog { position: absolute; left: 32px; top: 0; width: 328px; height: 818px; background: #e6e6e6; border-left: 1px solid #cfcfcf; display: flex; flex-direction: column; gap: 4px; padding: 0 6px 0 5px; overflow: hidden; }
.dlg-title { height: 24px; flex: none; margin: 0 -6px 0 -5px; background: #5c8580; display: flex; align-items: center; padding: 0 9px 0 7px; color: #e4eeec; font-size: 13px; }
.dlg-gear { width: 14px; height: 14px; flex: none; }
.dlg-name { margin-left: 10px; flex: 1; letter-spacing: .2px; }
.dlg-ctl { width: 14px; height: 14px; margin-left: 7px; flex: none; }

.panel { background: #fff; border-bottom: 2px solid #d2d2d2; padding: 0 9px; flex: none; }
.phead { height: 30px; display: flex; align-items: center; justify-content: space-between; margin: 0 -3px 0 -2px; padding: 0 0 4px 0; color: #3a8cc3; font-size: 14px; }
.chev { width: 12px; height: 8px; }
.chev.small { width: 10px; height: 7px; }
.p-type { height: 64px; }
.select { height: 26px; border: 1px solid #a8a8a8; display: flex; align-items: center; justify-content: space-between; padding: 2px 5px 2px 2px; background: #fff; }
.sel-inner { width: 275px; height: 100%; display: flex; align-items: center; padding-left: 2px; gap: 5px; }
.sel-inner.on { background: #3399ff; color: #fff; outline: 1px dotted #d2691e; outline-offset: -1px; }
.sel-ic { width: 16px; height: 16px; flex: none; }
.sel-dark { color: #222; }

.p-body { height: 70px; }
.pick { display: flex; gap: 2px; height: 32px; }
.pick-bar { width: 264px; background: #fbd56e; display: flex; align-items: center; padding-left: 2px; gap: 5px; }
.pick-check { width: 13px; height: 12px; }
.pick-btn { width: 32px; background: #f9e8ae; border: 1px solid #f8d878; display: flex; align-items: center; justify-content: center; }
.cross { width: 20px; height: 20px; }

.p-list { flex: 1; border-bottom: 0; }
.sub { background: #f0f6f6; border: 1px solid #dcdede; padding: 0 8px; margin-top: 3px; }
.shead { height: 22px; display: flex; align-items: center; justify-content: space-between; margin-right: -3px; color: #3a8cc3; font-size: 12px; }
.s-lib { height: 160px; }
.cb { display: flex; align-items: center; gap: 4px; height: 23px; color: #222; white-space: nowrap; }
.cb-first { margin-top: 6px; }
.box { width: 13px; height: 13px; border: 1px solid #8a8a8a; background: linear-gradient(135deg, #dcdcdc, #f8f8f8); flex: none; display: block; }
.box svg { display: block; width: 11px; height: 11px; }
.pathrow { display: flex; gap: 2px; height: 23px; margin: 2px 0 3px; }
.pathinput { width: 254px; background: #eeeeee; border: 1px solid #dcdcdc; }
.browse { width: 24px; background: #f0f0f0; border: 1px solid #d6d6d6; display: flex; align-items: center; justify-content: center; }
.folder { width: 17px; height: 15px; }
.s-mat { height: 440px; margin-top: 3px; }
.s-mat .shead { height: 23px; padding-top: 1px; margin-bottom: 7px; }

.tablewrap { position: relative; width: 277px; border: 1px solid #e4e4e4; border-bottom: 0; background: #fff; }
.mat { width: 276px; border-collapse: collapse; table-layout: fixed; }
.c1 { width: 164px; }
.c2 { width: 36px; }
.c3 { width: 37px; }
.c4 { width: 39px; }
.mat th { height: 21px; background: #f0f0f0; font-weight: 400; text-align: left; padding: 1px 0 0 5px; border-right: 1px solid #d8d8d8; border-bottom: 1px solid #d6d6d6; color: #333; white-space: nowrap; }
.mat th.first { padding-left: 6px; }
.mat td { height: 20px; padding: 0 0 0 4px; border-bottom: 1px solid #ededed; border-right: 1px solid #ededed; white-space: nowrap; overflow: hidden; color: #333; }
.mat td:first-child { border-right: 1px solid #000; }
.mat tr:nth-child(even) td { background: #f7f7f7; }
.ck svg { display: block; width: 14px; height: 12px; margin-left: 1px; }

.scrollbar { position: absolute; right: 0; top: 22px; width: 14px; height: 380px; background: #f1f1f1; display: flex; flex-direction: column; align-items: center; }
.sb-up { width: 0; height: 0; margin-top: 7px; border-left: 4px solid transparent; border-right: 4px solid transparent; border-bottom: 4px solid #666; }
.sb-down { position: absolute; top: 366px; width: 0; height: 0; border-left: 4px solid transparent; border-right: 4px solid transparent; border-top: 4px solid #666; }
.sb-thumb { width: 14px; height: 71px; margin-top: 7px; background: linear-gradient(90deg, #cfcfcf, #f0f0f0 40%, #d4d4d4); border: 1px solid #a8a8a8; border-radius: 2px; display: flex; flex-direction: column; align-items: center; justify-content: center; gap: 1px; }
.sb-thumb i { display: block; width: 7px; height: 1px; background: #555; }

.arrow { position: absolute; left: 243px; top: 445px; width: 180px; height: 20px; }
```
